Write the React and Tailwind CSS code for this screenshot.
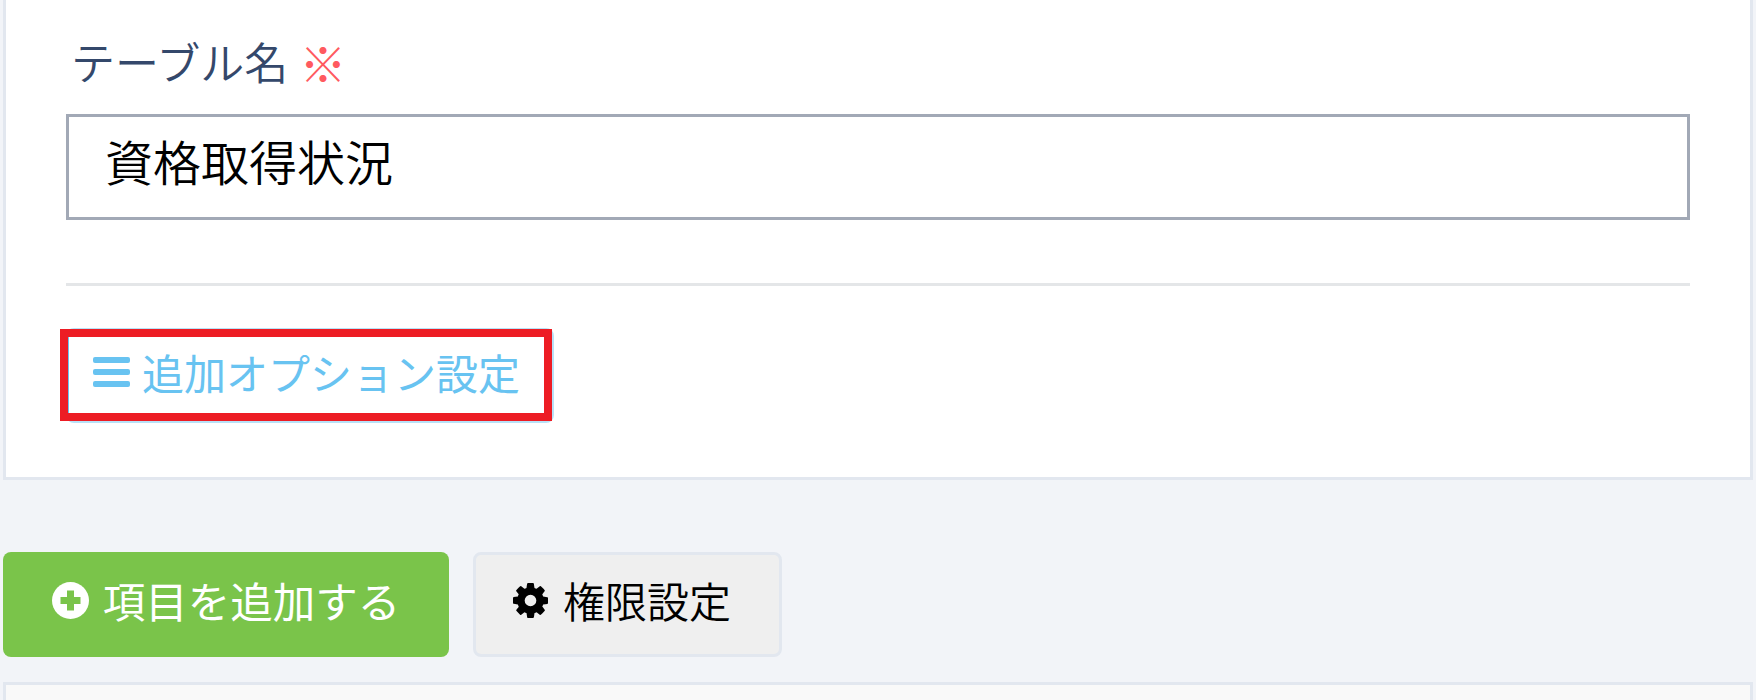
const font = { fontFamily: '"Noto Sans CJK JP", sans-serif' };

function BarsIcon() {
  return (
    <svg width="37" height="30" viewBox="0 0 37 30" fill="currentColor" className="shrink-0">
      <rect x="0" y="0" width="37" height="6" rx="2" />
      <rect x="0" y="12" width="37" height="6" rx="2" />
      <rect x="0" y="24" width="37" height="6" rx="2" />
    </svg>
  );
}

function PlusCircleIcon() {
  return (
    <svg width="37" height="37" viewBox="0 0 37 37" className="shrink-0">
      <circle cx="18.5" cy="18.500" r="18.5" fill="#ffffff" />
      <path d="M15 8.500h7v6.500h6.500v7h-6.500v6.500h-7v-6.500h-6.500v-7h6.500z" fill="#7ac44a" />
    </svg>
  );
}

function CogIcon() {
  return (
    <svg width="35" height="35" viewBox="128 128 1536 1536" fill="currentColor" className="shrink-0">
      <path d="M1152 896q0-106-75-181t-181-75-181 75-75 181 75 181 181 75 181-75 75-181zm512-109v222q0 12-8 23t-20 13l-185 28q-19 54-39 91 35 50 107 138 10 12 10 25t-9 23q-27 37-99 108t-94 71q-12 0-26-9l-138-108q-44 23-91 38-16 136-29 186-7 28-36 28h-222q-14 0-24.500-8.500t-11.500-21.500l-28-184q-49-16-90-37l-141 107q-10 9-25 9-14 0-25-11-126-114-165-168-7-10-7-23 0-12 8-23 15-21 51-66.500t54-70.500q-27-50-41-99l-183-27q-13-2-21-12.500t-8-23.500v-222q0-12 8-23t19-13l186-28q14-46 39-92-40-57-107-138-10-12-10-24 0-10 9-23 26-36 98.500-107.500t94.500-71.500q13 0 26 10l138 107q44-23 91-38 16-136 29-186 7-28 36-28h222q14 0 24.500 8.500t11.500 21.500l28 184q49 16 90 37l142-107q9-9 24-9 13 0 25 10 129 119 165 170 7 8 7 22 0 12-8 23-15 21-51 66.500t-54 70.500q26 50 41 98l183 28q13 2 21 12.500t8 23.500z" />
    </svg>
  );
}

function App() {
  return (
    <div style={font} className="h-[700px] w-[1756px] overflow-hidden bg-[#f2f4f8] px-[3px]">
      <div className="h-[480px] border-x-[3px] border-b-[3px] border-[#e2e7ef] bg-white px-[60px] pt-[34px]">
        <div className="flex h-[54px] items-center pl-[5px] text-[44px] leading-none font-[350] text-[#34486b]">
          テーブル名
          <span className="ml-[11px] text-[47px] font-light text-[#ff5a5f]">※</span>
        </div>
        <div className="mt-[26px] flex h-[106px] items-center border-[3px] border-[#a2a9b6] pb-[14px] pl-[36px] text-[48px] leading-none font-[350] text-black">
          資格取得状況
        </div>
        <div className="mt-[63px] h-[3px] bg-[#e4e6e8]"></div>
        <div className="relative mt-[42px] flex h-[95px] w-[488px] items-center gap-[12px] rounded-lg border-[3px] border-[#b8e1f7] border-l-[#68c3f1] pb-[8px] pl-[24px] text-[42px] leading-none font-normal whitespace-nowrap text-[#68c3f1]">
          <BarsIcon />
          追加オプション設定
          <div className="absolute top-[-2px] left-[-9px] h-[92px] w-[492px] border-8 border-[#ed1c24]"></div>
        </div>
      </div>
      <div className="mt-[72px] flex gap-[24px]">
        <button className="flex h-[105px] w-[446px] items-center justify-center gap-[14px] rounded-lg bg-[#7ac44a] pb-[9px] text-[42.5px] leading-none font-normal text-white">
          <PlusCircleIcon />
          項目を追加する
        </button>
        <button className="flex h-[105px] w-[309px] items-center justify-center gap-[15px] rounded-lg border-[3px] border-[#e2e7ef] bg-[#efefef] pr-[11px] pb-[9px] text-[42px] leading-none font-[350] text-black">
          <CogIcon />
          権限設定
        </button>
      </div>
      <div className="mt-[25px] h-[40px] border-x-[3px] border-t-[3px] border-[#e2e7ef] bg-[#f9f9f9]"></div>
    </div>
  );
}

export default App;
